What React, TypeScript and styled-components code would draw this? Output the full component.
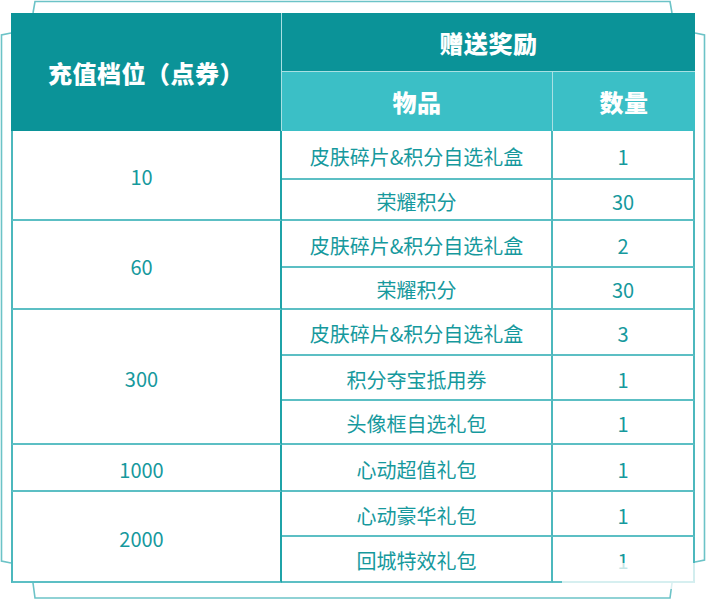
import React from "react";
import styled, { createGlobalStyle } from "styled-components";

const Global = createGlobalStyle`
  html, body { margin: 0; padding: 0; background: #ffffff; }
  body { font-family: "Noto Sans CJK SC", "Noto Sans", sans-serif; }
`;

const Page = styled.div`
  position: relative;
  width: 706px;
  height: 600px;
  padding: 13px 0 0 11px;
  box-sizing: border-box;
  background: #ffffff;
`;

const Frame = styled.svg`
  position: absolute;
  left: 0;
  top: 0;
  width: 706px;
  height: 600px;
  pointer-events: none;
`;

const Grid = styled.div`
  position: relative;
  display: grid;
  grid-template-columns: 271px 271px 142px;
  grid-template-rows: 59px 59px 49px 41px 47px 42px 46px 45px 44px 47px 45px 46px;
  width: 684px;
`;

const HeadCell = styled.div<{ $light?: boolean; $row: string; $col: string; $right?: boolean; $bottom?: boolean }>`
  grid-row: ${(p) => p.$row};
  grid-column: ${(p) => p.$col};
  box-sizing: border-box;
  display: flex;
  align-items: center;
  justify-content: center;
  background: ${(p) => (p.$light ? "#3bbfc6" : "#0b9398")};
  color: #ffffff;
  font-size: 24px;
  font-weight: 900;
  letter-spacing: 0.5px;
  border-right: ${(p) => (p.$right ? "1px solid #a9e0e3" : "none")};
  border-bottom: ${(p) => (p.$bottom ? "1px solid #a9e0e3" : "none")};
`;

const Cell = styled.div<{ $row: string; $col: string; $first?: boolean }>`
  grid-row: ${(p) => p.$row};
  grid-column: ${(p) => p.$col};
  box-sizing: border-box;
  display: flex;
  align-items: center;
  justify-content: center;
  padding-top: 3px;
  padding-right: ${(p) => (p.$first ? "10px" : "0")};
  color: #16999d;
  font-size: 20px;
  background: #ffffff;
  border-bottom: 2px solid #5cbfc4;
  border-right: 2px solid ${(p) => (p.$first ? "#1fa3a8" : "#4cb8bd")};
  border-left: ${(p) => (p.$first ? "2px solid #4cb8bd" : "none")};
`;

const Fade = styled.div`
  position: absolute;
  left: 551px;
  top: 550px;
  width: 150px;
  height: 26px;
  background: rgba(255, 255, 255, 0.75);
`;

type Item = { name: string; qty: string };
type Tier = { value: string; items: Item[] };

const tiers: Tier[] = [
  { value: "10", items: [{ name: "皮肤碎片&积分自选礼盒", qty: "1" }, { name: "荣耀积分", qty: "30" }] },
  { value: "60", items: [{ name: "皮肤碎片&积分自选礼盒", qty: "2" }, { name: "荣耀积分", qty: "30" }] },
  {
    value: "300",
    items: [
      { name: "皮肤碎片&积分自选礼盒", qty: "3" },
      { name: "积分夺宝抵用券", qty: "1" },
      { name: "头像框自选礼包", qty: "1" },
    ],
  },
  { value: "1000", items: [{ name: "心动超值礼包", qty: "1" }] },
  { value: "2000", items: [{ name: "心动豪华礼包", qty: "1" }, { name: "回城特效礼包", qty: "1" }] },
];

export default function App() {
  const cells: React.ReactNode[] = [];
  let row = 3;
  tiers.forEach((t, ti) => {
    const start = row;
    cells.push(
      <Cell key={`t${ti}`} $row={`${start} / ${start + t.items.length}`} $col="1" $first>
        {t.value}
      </Cell>
    );
    t.items.forEach((it, ii) => {
      cells.push(
        <Cell key={`n${ti}-${ii}`} $row={`${row}`} $col="2">
          {it.name}
        </Cell>
      );
      cells.push(
        <Cell key={`q${ti}-${ii}`} $row={`${row}`} $col="3">
          {it.qty}
        </Cell>
      );
      row += 1;
    });
  });

  return (
    <Page>
      <Global />
      <Frame viewBox="0 0 706 600">
        <g fill="none" stroke="#6cc3c7" strokeWidth="1.6">
          <path d="M33 13 L35 1.5 L670 1.5 L672 13" />
          <path d="M11 33 L1.5 35 L1.5 561 L11 563" />
          <path d="M695 33 L704.5 35 L704.5 560 L695 562" />
          <path d="M33 583 L35 598 L670 598 L672 583" />
        </g>
      </Frame>
      <Grid>
        <HeadCell $row="1 / 3" $col="1" $right>
          充值档位（点券）
        </HeadCell>
        <HeadCell $row="1" $col="2 / 4" $bottom>
          赠送奖励
        </HeadCell>
        <HeadCell $row="2" $col="2" $light $right>
          物品
        </HeadCell>
        <HeadCell $row="2" $col="3" $light>
          数量
        </HeadCell>
        {cells}
        <Fade />
      </Grid>
    </Page>
  );
}
